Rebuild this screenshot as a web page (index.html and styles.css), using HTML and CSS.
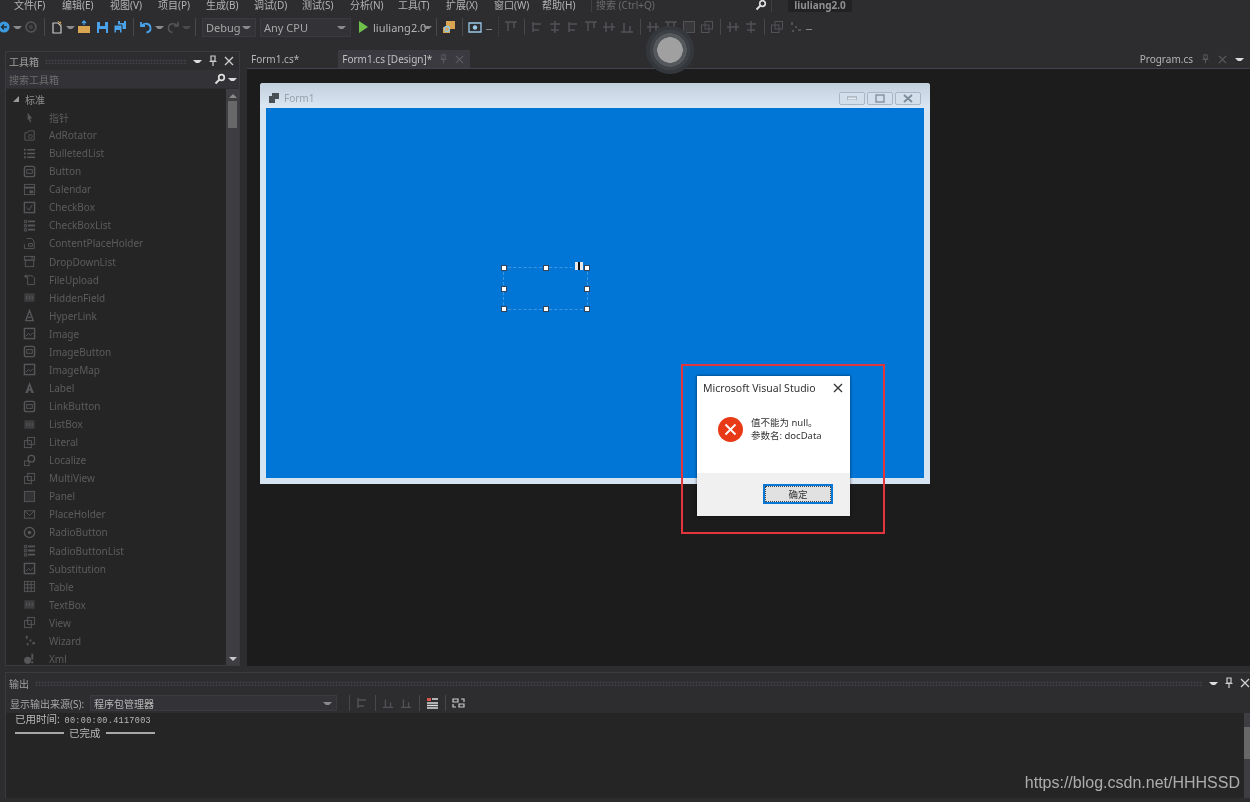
FILE: index.html
```html
<!DOCTYPE html>
<html lang="en">
<head>
	<meta charset="UTF-8">
	<meta name="viewport" content="width=device-width, initial-scale=1.0">
	<title>liuliang2.0 - Microsoft Visual Studio</title>
	<link rel="stylesheet" href="styles.css">
</head>
<body>
	<svg class="sprite" xmlns="http://www.w3.org/2000/svg">
		<symbol id="i-pointer" viewBox="0 0 14 14"><path d="M5 2l5 6H7.5L9 11.5 7.6 12 6 8.6 5 10z" fill="currentColor" stroke="none"/></symbol>
		<symbol id="i-ad" viewBox="0 0 14 14"><path d="M2 4h3l1-2h6v10H2z"/><circle cx="8" cy="8" r="2"/></symbol>
		<symbol id="i-list" viewBox="0 0 14 14"><path d="M4.500 3H13M4.500 7H13M4.500 11H13" stroke-width="1.500"/><path d="M1 2h2v2H1zM1 6h2v2H1zM1 10h2v2H1z" fill="currentColor" stroke="none"/></symbol>
		<symbol id="i-checklist" viewBox="0 0 14 14"><path d="M5.500 2.500H13M5.500 7H13M5.500 11.500H13" stroke-width="2"/><path d="M1.500 1.500h2.500v2.500H1.500zM1.500 6h2.500v2.500H1.500zM1.500 10.500h2.500V13H1.500z"/></symbol>
		<symbol id="i-button" viewBox="0 0 14 14"><rect x="1.500" y="1.500" width="11" height="11" rx="2" stroke-width="1.500"/><rect x="4" y="5" width="6" height="4"/></symbol>
		<symbol id="i-calendar" viewBox="0 0 14 14"><rect x="1.500" y="1.500" width="11" height="11"/><path d="M1.500 5h11" stroke-width="2"/><path d="M7 8h4v3H7z" fill="currentColor" stroke="none"/></symbol>
		<symbol id="i-check" viewBox="0 0 14 14"><rect x="1.500" y="1.500" width="11" height="11" stroke-width="1.500"/><path d="M4 7l2.500 3L10 4"/></symbol>
		<symbol id="i-doc" viewBox="0 0 14 14"><path d="M4 1.500h5l3 3v8H4M1.500 8v4.500H4"/><path d="M6 7h4v3H6z"/></symbol>
		<symbol id="i-drop" viewBox="0 0 14 14"><rect x="1.500" y="1.500" width="11" height="4"/><rect x="2.500" y="5.500" width="9" height="7"/><path d="M9 3h2" stroke-width="1.500"/></symbol>
		<symbol id="i-upload" viewBox="0 0 14 14"><path d="M5 3h5l2.500 2.500v7H5z"/><path d="M1 3.500L4 1v5z" fill="currentColor" stroke="none"/></symbol>
		<symbol id="i-hidden" viewBox="0 0 14 14"><rect x="1.500" y="2.500" width="11" height="9" fill="currentColor" opacity=".5" stroke="none"/><path d="M4 5.500v3M7 5.500v3M10 5.500v3"/></symbol>
		<symbol id="i-a" viewBox="0 0 14 14"><path d="M7 1.500L3 12.500h8zM5.500 9h3" stroke-width="1.500"/></symbol>
		<symbol id="i-image" viewBox="0 0 14 14"><rect x="1.500" y="1.500" width="11" height="11" stroke-width="1.500"/><path d="M3 10l3-3 2 2 3-3"/></symbol>
		<symbol id="i-label" viewBox="0 0 14 14"><path d="M7 1L2.500 13h2.800l.8-2.800h2L9 13h2.800zM6.300 8.500L7 5.500l.8 3z" fill="currentColor" stroke="none"/></symbol>
		<symbol id="i-stack" viewBox="0 0 14 14"><rect x="5" y="1.500" width="7.500" height="7.500"/><rect x="1.500" y="5" width="7.500" height="7.500"/></symbol>
		<symbol id="i-locale" viewBox="0 0 14 14"><circle cx="9" cy="5" r="3.500" stroke-width="1.500"/><rect x="1.500" y="7.500" width="5" height="5"/></symbol>
		<symbol id="i-panel" viewBox="0 0 14 14"><rect x="1.500" y="1.500" width="11" height="11" fill="currentColor" fill-opacity=".3"/></symbol>
		<symbol id="i-mail" viewBox="0 0 14 14"><rect x="1.500" y="3" width="11" height="8"/><path d="M1.500 3L7 8l5.500-5"/></symbol>
		<symbol id="i-radio" viewBox="0 0 14 14"><circle cx="7" cy="7" r="5.500" stroke-width="1.500"/><circle cx="7" cy="7" r="2" fill="currentColor" stroke="none"/></symbol>
		<symbol id="i-table" viewBox="0 0 14 14"><rect x="1.500" y="1.500" width="11" height="11"/><path d="M1.500 5h11M1.500 8.500h11M5 1.500v11M8.800 1.500v11"/></symbol>
		<symbol id="i-wizard" viewBox="0 0 14 14"><path d="M3 2h2v3H3zM7 6h2v2H7zM10 9h3v2h-3zM4 10h2v2H4z" fill="currentColor" stroke="none"/></symbol>
		<symbol id="i-xml" viewBox="0 0 14 14"><circle cx="5" cy="9" r="3.800" fill="currentColor" stroke="none"/><path d="M10 2v6M10 10v2" stroke-width="2"/></symbol>
		<symbol id="i-align" viewBox="0 0 14 14"><path d="M3 2v10M3 4h8M3 10h6" stroke-width="1.500"/></symbol>
		<symbol id="i-center" viewBox="0 0 14 14"><path d="M7 1v12M2 4h10M3 10h8" stroke-width="1.500"/></symbol>
		<symbol id="i-top" viewBox="0 0 14 14"><path d="M1 2h12M4 2v9M10 2v6" stroke-width="1.500"/></symbol>
		<symbol id="i-middle" viewBox="0 0 14 14"><path d="M1 7h12M4 2v10M10 3v8" stroke-width="1.500"/></symbol>
		<symbol id="i-bottom" viewBox="0 0 14 14"><path d="M1 12h12M4 3v9M10 6v6" stroke-width="1.500"/></symbol>
		<symbol id="i-pin" viewBox="0 0 10 12"><path d="M3 1h4v5H3zM1.500 6.500h7M5 7v4" stroke-width="1.200"/></symbol>
		<symbol id="i-close" viewBox="0 0 10 10"><path d="M1 1l8 8M9 1L1 9" stroke-width="1.300"/></symbol>
		<symbol id="i-search" viewBox="0 0 12 12"><circle cx="7.500" cy="4.500" r="2.800" stroke-width="1.700"/><path d="M5.500 6.500L1.500 10.500" stroke-width="2"/></symbol>
	</svg>

	<div class="app">
		<div class="menubar">
			<span class="menu-item">文件(F)</span>
			<span class="menu-item">编辑(E)</span>
			<span class="menu-item">视图(V)</span>
			<span class="menu-item">项目(P)</span>
			<span class="menu-item">生成(B)</span>
			<span class="menu-item">调试(D)</span>
			<span class="menu-item">测试(S)</span>
			<span class="menu-item">分析(N)</span>
			<span class="menu-item">工具(T)</span>
			<span class="menu-item">扩展(X)</span>
			<span class="menu-item">窗口(W)</span>
			<span class="menu-item">帮助(H)</span>
			<div class="quick-search">
				<span>搜索 (Ctrl+Q)</span>
				<svg class="ico search-ico"><use href="#i-search"/></svg>
			</div>
			<div class="solution-name">liuliang2.0</div>
		</div>

		<div class="toolbar">
			<span class="tb tb-back"><svg width="12" height="12" viewBox="0 0 12 12"><circle cx="6" cy="6" r="5.500" fill="#3c9ae0"/><path d="M9 6H4M6 3.500L3.500 6 6 8.500" fill="none" stroke="#1f2a33" stroke-width="1.300"/></svg></span>
			<span class="tb-arrow"></span>
			<span class="tb"><svg width="12" height="12" viewBox="0 0 12 12"><circle cx="6" cy="6" r="5" fill="none" stroke="#555" stroke-width="1.500"/><circle cx="6" cy="6" r="2" fill="#444"/></svg></span>
			<span class="tb-sep"></span>
			<span class="tb"><svg width="14" height="14" viewBox="0 0 14 14"><path d="M3 3h5l3 3v7H3z" fill="none" stroke="#c8c8c8" stroke-width="1.200"/><path d="M8 1l1 1.500L11 2l-1 1.500 1.500 1" fill="none" stroke="#d8a24a"/></svg></span>
			<span class="tb-arrow"></span>
			<span class="tb"><svg width="14" height="14" viewBox="0 0 14 14"><path d="M1 6h12v7H1z" fill="#d9a550"/><path d="M7 1v4M5 3l2-2 2 2" fill="none" stroke="#4a9fe0" stroke-width="1.300"/></svg></span>
			<span class="tb"><svg width="13" height="13" viewBox="0 0 13 13"><path d="M1 1h11v11H1z" fill="#4aa3ea"/><path d="M4 1h5v4H4zM3 8h7v4H3z" fill="#2d2d30"/></svg></span>
			<span class="tb"><svg width="14" height="14" viewBox="0 0 14 14"><path d="M5 1h8v8H5z" fill="#4aa3ea"/><path d="M1 5h8v8H1z" fill="#4aa3ea" stroke="#2d2d30"/><path d="M3 10h4v3H3zM7 1h4v2H7z" fill="#2d2d30"/></svg></span>
			<span class="tb-sep"></span>
			<span class="tb"><svg width="14" height="14" viewBox="0 0 14 14"><path d="M2 2v4h4M2.500 6C5 2.500 11 3 11.500 7.500 11.800 10 10 12 7.500 12.500" fill="none" stroke="#4aa3ea" stroke-width="1.800"/></svg></span>
			<span class="tb-arrow"></span>
			<span class="tb"><svg width="14" height="14" viewBox="0 0 14 14"><path d="M12 2v4H8M11.500 6C9 2.500 3 3 2.500 7.500 2.200 10 4 12 6.500 12.500" fill="none" stroke="#555" stroke-width="1.500"/></svg></span>
			<span class="tb-arrow tb-arrow-dim"></span>
			<span class="tb-sep"></span>
			<div class="combo combo-debug">Debug<span class="tb-arrow"></span></div>
			<div class="combo combo-cpu">Any CPU<span class="tb-arrow"></span></div>
			<span class="tb-play"><svg width="10" height="12" viewBox="0 0 10 12"><path d="M1 0l9 6-9 6z" fill="#6fbf4a"/></svg></span>
			<span class="run-name">liuliang2.0</span>
			<span class="tb-arrow"></span>
			<span class="tb-sep"></span>
			<span class="tb"><svg width="14" height="14" viewBox="0 0 14 14"><path d="M4 1h9v8H8v4H1V7h3z" fill="#d9a550"/><circle cx="5" cy="9" r="2.500" fill="none" stroke="#8fc7f0" stroke-width="1.300"/></svg></span>
			<span class="tb-sep"></span>
			<span class="tb"><svg width="14" height="12" viewBox="0 0 14 12"><path d="M1 2h12v9H1z" fill="none" stroke="#9ac8e8" stroke-width="1.300"/><circle cx="7" cy="6.500" r="2.200" fill="#9ac8e8"/></svg></span>
			<span class="tb-drop"></span>
			<span class="tb-grip"></span>
			<span class="tb tb-dim"><svg class="ico" width="14" height="14"><use href="#i-top"/></svg></span>
			<span class="tb-sep tb-sep-short"></span>
			<span class="tb tb-dim"><svg class="ico" width="14" height="14"><use href="#i-align"/></svg></span>
			<span class="tb tb-dim"><svg class="ico" width="14" height="14"><use href="#i-center"/></svg></span>
			<span class="tb tb-dim"><svg class="ico" width="14" height="14"><use href="#i-align"/></svg></span>
			<span class="tb tb-dim"><svg class="ico" width="14" height="14"><use href="#i-top"/></svg></span>
			<span class="tb tb-dim"><svg class="ico" width="14" height="14"><use href="#i-middle"/></svg></span>
			<span class="tb tb-dim"><svg class="ico" width="14" height="14"><use href="#i-bottom"/></svg></span>
			<span class="tb-sep tb-sep-short"></span>
			<span class="tb tb-dim"><svg class="ico" width="14" height="14"><use href="#i-middle"/></svg></span>
			<span class="tb tb-dim"><svg class="ico" width="14" height="14"><use href="#i-top"/></svg></span>
			<span class="tb tb-dim"><svg class="ico" width="14" height="14"><use href="#i-panel"/></svg></span>
			<span class="tb tb-dim"><svg class="ico" width="14" height="14"><use href="#i-stack"/></svg></span>
			<span class="tb-sep tb-sep-short"></span>
			<span class="tb tb-dim"><svg class="ico" width="14" height="14"><use href="#i-middle"/></svg></span>
			<span class="tb tb-dim"><svg class="ico" width="14" height="14"><use href="#i-center"/></svg></span>
			<span class="tb-sep tb-sep-short"></span>
			<span class="tb tb-dim"><svg class="ico" width="14" height="14"><use href="#i-stack"/></svg></span>
			<span class="tb tb-dim"><svg class="ico" width="14" height="14"><use href="#i-wizard"/></svg></span>
			<span class="tb-drop"></span>
		</div>

		<div class="workspace">
			<div class="toolbox">
				<div class="panel-title">
					<span class="panel-name">工具箱</span>
					<span class="panel-grip"></span>
					<span class="tb-arrow tb-arrow-light"></span>
					<svg class="ico panel-ico" width="10" height="12"><use href="#i-pin"/></svg>
					<svg class="ico panel-ico" width="10" height="10"><use href="#i-close"/></svg>
				</div>
				<div class="toolbox-search">
					<span>搜索工具箱</span>
					<svg class="ico search-ico"><use href="#i-search"/></svg>
					<span class="tb-arrow tb-arrow-light"></span>
				</div>
				<div class="toolbox-body">
					<div class="tree">
						<div class="tree-head"><span class="tree-caret"></span>标准</div>
						<ul class="tool-list">
							<li><svg class="ico"><use href="#i-pointer"/></svg>指针</li>
							<li><svg class="ico"><use href="#i-ad"/></svg>AdRotator</li>
							<li><svg class="ico"><use href="#i-list"/></svg>BulletedList</li>
							<li><svg class="ico"><use href="#i-button"/></svg>Button</li>
							<li><svg class="ico"><use href="#i-calendar"/></svg>Calendar</li>
							<li><svg class="ico"><use href="#i-check"/></svg>CheckBox</li>
							<li><svg class="ico"><use href="#i-checklist"/></svg>CheckBoxList</li>
							<li><svg class="ico"><use href="#i-doc"/></svg>ContentPlaceHolder</li>
							<li><svg class="ico"><use href="#i-drop"/></svg>DropDownList</li>
							<li><svg class="ico"><use href="#i-upload"/></svg>FileUpload</li>
							<li><svg class="ico"><use href="#i-hidden"/></svg>HiddenField</li>
							<li><svg class="ico"><use href="#i-a"/></svg>HyperLink</li>
							<li><svg class="ico"><use href="#i-image"/></svg>Image</li>
							<li><svg class="ico"><use href="#i-button"/></svg>ImageButton</li>
							<li><svg class="ico"><use href="#i-image"/></svg>ImageMap</li>
							<li><svg class="ico"><use href="#i-label"/></svg>Label</li>
							<li><svg class="ico"><use href="#i-button"/></svg>LinkButton</li>
							<li><svg class="ico"><use href="#i-hidden"/></svg>ListBox</li>
							<li><svg class="ico"><use href="#i-stack"/></svg>Literal</li>
							<li><svg class="ico"><use href="#i-locale"/></svg>Localize</li>
							<li><svg class="ico"><use href="#i-stack"/></svg>MultiView</li>
							<li><svg class="ico"><use href="#i-panel"/></svg>Panel</li>
							<li><svg class="ico"><use href="#i-mail"/></svg>PlaceHolder</li>
							<li><svg class="ico"><use href="#i-radio"/></svg>RadioButton</li>
							<li><svg class="ico"><use href="#i-checklist"/></svg>RadioButtonList</li>
							<li><svg class="ico"><use href="#i-image"/></svg>Substitution</li>
							<li><svg class="ico"><use href="#i-table"/></svg>Table</li>
							<li><svg class="ico"><use href="#i-hidden"/></svg>TextBox</li>
							<li><svg class="ico"><use href="#i-stack"/></svg>View</li>
							<li><svg class="ico"><use href="#i-wizard"/></svg>Wizard</li>
							<li><svg class="ico"><use href="#i-xml"/></svg>Xml</li>
						</ul>
					</div>
					<div class="vscroll">
						<span class="caret-up"></span>
						<span class="vscroll-thumb"></span>
						<span class="vscroll-gap"></span>
						<span class="caret-down"></span>
					</div>
				</div>
			</div>

			<div class="document">
				<div class="doc-tabs">
					<span class="doc-tab">Form1.cs*</span>
					<span class="doc-tab doc-tab-active">Form1.cs [Design]*
						<svg class="ico tab-ico" width="9" height="10"><use href="#i-pin"/></svg>
						<svg class="ico tab-ico" width="9" height="9"><use href="#i-close"/></svg>
					</span>
					<span class="doc-tab-spacer"></span>
					<span class="doc-tab doc-tab-right">Program.cs
						<svg class="ico tab-ico" width="9" height="10"><use href="#i-pin"/></svg>
						<svg class="ico tab-ico" width="9" height="9"><use href="#i-close"/></svg>
						<span class="tb-arrow tb-arrow-light"></span>
					</span>
				</div>
				<div class="designer">
					<div class="form-window">
						<div class="form-title">
							<svg width="10" height="10" viewBox="0 0 10 10"><path d="M3 0h7v6H3zM0 3h6v7H0z" fill="#4a4f55"/></svg>
							<span class="form-name">Form1</span>
							<span class="win-btn"><svg width="10" height="4" viewBox="0 0 10 4"><rect width="10" height="3" y="1" fill="#e8eef4" stroke="#7d8a98" stroke-width=".8"/></svg></span>
							<span class="win-btn"><svg width="10" height="9" viewBox="0 0 10 9"><rect x="1" y="1" width="8" height="7" fill="none" stroke="#7d8a98" stroke-width="1.300"/></svg></span>
							<span class="win-btn"><svg width="10" height="9" viewBox="0 0 10 9"><path d="M1 1l8 7M9 1L1 8" stroke="#7d8a98" stroke-width="1.800"/></svg></span>
						</div>
						<div class="form-client">
							<div class="selection">
								<span class="handle h-tl"></span>
								<span class="handle h-tc"></span>
								<span class="handle h-tr"></span>
								<span class="handle h-ml"></span>
								<span class="handle h-mr"></span>
								<span class="handle h-bl"></span>
								<span class="handle h-bc"></span>
								<span class="handle h-br"></span>
								<span class="smart-tag"></span>
							</div>
						</div>
					</div>
				</div>
			</div>
		</div>

		<div class="output">
			<div class="panel-title output-title">
				<span class="panel-name">输出</span>
				<span class="panel-grip"></span>
				<span class="tb-arrow tb-arrow-light"></span>
				<svg class="ico panel-ico" width="10" height="12"><use href="#i-pin"/></svg>
				<svg class="ico panel-ico" width="10" height="10"><use href="#i-close"/></svg>
			</div>
			<div class="output-bar">
				<span class="output-label">显示输出来源(S):</span>
				<div class="combo combo-output">程序包管理器<span class="tb-arrow"></span></div>
				<span class="tb-sep tb-sep-short"></span>
				<span class="tb tb-dim"><svg class="ico" width="14" height="14"><use href="#i-align"/></svg></span>
				<span class="tb-sep tb-sep-short"></span>
				<span class="tb tb-dim"><svg class="ico" width="12" height="12"><use href="#i-bottom"/></svg></span>
				<span class="tb tb-dim"><svg class="ico" width="12" height="12"><use href="#i-bottom"/></svg></span>
				<span class="tb-sep tb-sep-short"></span>
				<span class="tb"><svg width="12" height="12" viewBox="0 0 12 12"><path d="M1 1h4v3H1z" fill="#d9534f"/><path d="M6 2h6M1 6h11M1 8.500h11M1 11h11" stroke="#ddd" stroke-width="1.300"/></svg></span>
				<span class="tb-sep tb-sep-short"></span>
				<span class="tb"><svg width="13" height="12" viewBox="0 0 13 12"><path d="M1 2h5v3H1zM7 7h5v3H7zM9 2h3v3M4 10H1V7" fill="none" stroke="#ccc" stroke-width="1.200"/></svg></span>
			</div>
			<div class="output-text">
				<div class="output-lines">
					<div class="output-line">已用时间: <span class="output-time">00:00:00.4117003</span></div>
					<div class="output-line output-done"><span class="rule"></span>已完成<span class="rule"></span></div>
				</div>
				<div class="output-scroll"><span class="output-thumb"></span></div>
			</div>
		</div>

		<div class="touch-dot"></div>

		<div class="msgbox">
			<div class="msgbox-title">
				<span>Microsoft Visual Studio</span>
				<svg class="ico msgbox-close" width="10" height="10"><use href="#i-close"/></svg>
			</div>
			<div class="msgbox-body">
				<svg class="msgbox-icon" width="25" height="25" viewBox="0 0 25 25"><circle cx="12.500" cy="12.500" r="12.500" fill="#e83a17"/><path d="M7.500 7.500l10 10M17.500 7.500l-10 10" stroke="#fff" stroke-width="1.800"/></svg>
				<p class="msgbox-text">值不能为 null。<br>参数名: docData</p>
			</div>
			<div class="msgbox-foot">
				<button class="msgbox-ok">确定</button>
			</div>
		</div>
		<div class="red-box"></div>

		<div class="watermark">https://blog.csdn.net/HHHSSD</div>
	</div>
</body>
</html>
```
FILE: styles.css
```css
* {
	box-sizing: border-box;
}
body {
	margin: 0;
	padding: 0;
	background: #2d2d30;
	overflow: hidden;
}
.sprite {
	display: none;
}
.ico {
	fill: none;
	stroke: currentColor;
	flex: none;
}
.app {
	position: relative;
	width: 1250px;
	height: 802px;
	overflow: hidden;
	background: #2d2d30;
	color: #b4b4b4;
	font-family: "Noto Sans", "Noto Sans CJK SC", sans-serif;
	font-size: 10px;
	filter: blur(0.45px);
}

/* menu */
.menubar {
	display: flex;
	align-items: center;
	height: 12px;
	padding-left: 14px;
	gap: 16px;
	overflow: hidden;
	background: #2d2d30;
}
.menu-item {
	flex: none;
	width: 32px;
	line-height: 12px;
	white-space: nowrap;
	margin-top: -2px;
}
.quick-search {
	display: flex;
	align-items: center;
	justify-content: space-between;
	width: 181px;
	height: 14px;
	margin-left: 1px;
	padding: 0 4px 2px 4px;
	border: 1px solid #3f3f46;
	border-top: 0;
	color: #6b6b6b;
}
.search-ico {
	width: 12px;
	height: 12px;
	color: #ddd;
}
.solution-name {
	width: 64px;
	height: 15px;
	line-height: 13px;
	text-align: center;
	background: #222224;
	color: #8f8f8f;
	font-weight: 700;
}

/* toolbar */
.toolbar {
	display: flex;
	align-items: center;
	height: 30px;
	margin-left: -5px;
}
.tb {
	flex: none;
	display: flex;
	align-items: center;
	justify-content: center;
	width: 18px;
	height: 18px;
}
.tb-dim {
	color: #525256;
}
.tb-arrow {
	flex: none;
	display: inline-block;
	width: 9px;
	height: 3px;
	border-top: 3px solid #8a8a8a;
	border-left: 3px solid transparent;
	border-right: 3px solid transparent;
	background-clip: padding-box;
}
.tb-arrow-dim {
	border-top-color: #4b4b4b;
}
.tb-arrow-light {
	border-top-color: #dcdcdc;
}
.tb-sep {
	flex: none;
	width: 8px;
	height: 18px;
	background: linear-gradient(#47474c, #47474c) center / 1px 100% no-repeat;
}
.tb-sep-short {
	height: 16px;
}
.tb-drop {
	flex: none;
	width: 10px;
	height: 5px;
	margin-top: 9px;
	background: linear-gradient(#888, #888) center top / 6px 1px no-repeat;
	border-bottom: 0;
}
.tb-grip {
	flex: none;
	width: 8px;
	height: 22px;
	background: radial-gradient(#55555a 40%, transparent 45%) center / 3px 3px repeat-y;
}
.combo {
	flex: none;
	display: flex;
	align-items: center;
	justify-content: space-between;
	height: 19px;
	padding: 0 4px 0 3px;
	background: #333337;
	border: 1px solid #3a3a3f;
	color: #a8a8a8;
	font-size: 11px;
}
.combo-debug {
	width: 54px;
	margin-left: 3px;
}
.combo-cpu {
	width: 91px;
	margin-left: 4px;
}
.tb-play {
	flex: none;
	display: flex;
	justify-content: center;
	width: 14px;
	margin-left: 5px;
}
.run-name {
	flex: none;
	width: 50px;
	margin-left: 3px;
	font-size: 11px;
	color: #b4b4b4;
}

/* middle */
.workspace {
	display: flex;
	gap: 7px;
	height: 616px;
	margin-top: 8px;
	padding-left: 5px;
}
.toolbox {
	display: flex;
	flex-direction: column;
	flex: none;
	width: 235px;
	margin-top: 1px;
	border: 1px solid #3a3a3f;
	background: #252526;
}
.panel-title {
	display: flex;
	align-items: center;
	flex: none;
	gap: 6px;
	height: 18px;
	padding: 0 5px 0 3px;
	background: #2d2d30;
	color: #a0a0a0;
}
.panel-name {
	flex: none;
}
.panel-grip {
	flex: 1;
	height: 5px;
	background: radial-gradient(#3f3f44 45%, transparent 50%) 0 0 / 3px 3px;
}
.panel-ico {
	color: #cfcfcf;
}
.toolbox-search {
	display: flex;
	align-items: center;
	flex: none;
	gap: 2px;
	height: 19px;
	padding: 0 2px 0 3px;
	background: #333337;
	color: #6e6e6e;
	border-bottom: 1px solid #2d2d30;
}
.toolbox-search span:first-child {
	flex: 1;
}
.toolbox-body {
	display: flex;
	flex: 1;
	min-height: 0;
}
.tree {
	flex: 1;
	overflow: hidden;
	padding-top: 1px;
}
.tree-head {
	display: flex;
	align-items: center;
	height: 18px;
	padding-left: 7px;
	color: #8e8e8e;
}
.tree-caret {
	width: 0;
	height: 0;
	margin-right: 6px;
	border-bottom: 6px solid #9a9a9a;
	border-left: 6px solid transparent;
}
.tool-list {
	list-style: none;
	margin: 0;
	padding: 0;
}
.tool-list li {
	display: flex;
	align-items: center;
	height: 18.07px;
	padding-left: 17px;
	color: #5c5c5c;
	font-size: 10px;
	white-space: nowrap;
}
.tool-list .ico {
	width: 13px;
	height: 13px;
	margin-right: 13px;
	color: #57575a;
}
.vscroll {
	display: flex;
	flex-direction: column;
	align-items: center;
	flex: none;
	width: 13px;
	padding: 5px 0 4px;
	background: #3e3e42;
}
.vscroll-thumb {
	width: 9px;
	height: 27px;
	margin-top: 3px;
	background: #686868;
}
.vscroll-gap {
	flex: 1;
}
.caret-up, .caret-down {
	width: 0;
	height: 0;
	border-left: 4px solid transparent;
	border-right: 4px solid transparent;
}
.caret-up {
	border-bottom: 4px solid #8a8a8a;
}
.caret-down {
	border-top: 4px solid #c8c8c8;
}

/* document area */
.document {
	display: flex;
	flex-direction: column;
	flex: 1;
	min-width: 0;
}
.doc-tabs {
	display: flex;
	align-items: flex-end;
	flex: none;
	height: 19px;
	border-bottom: 1px solid #43434c;
}
.doc-tab {
	display: flex;
	align-items: center;
	height: 18px;
	padding: 0 4px;
	color: #b4b4b4;
	white-space: nowrap;
}
.doc-tab-active {
	width: 132px;
	margin-left: 35px;
	background: #3a3a40;
	color: #c0c0c0;
	gap: 7px;
}
.doc-tab-spacer {
	flex: 1;
}
.doc-tab-right {
	gap: 8px;
	color: #b4b4b4;
	padding-right: 6px;
}
.tab-ico {
	color: #5c5c60;
}
.designer {
	flex: 1;
	padding: 14px 0 0 13px;
	background: #1c1c1c;
}
.form-window {
	display: flex;
	flex-direction: column;
	width: 670px;
	height: 401px;
	padding: 0 6px 6px;
	border-radius: 3px 3px 0 0;
	background: #d6e3f0;
}
.form-title {
	display: flex;
	align-items: center;
	flex: none;
	height: 25px;
	margin: 0 -6px;
	padding: 5px 9px 0 9px;
	border-radius: 3px 3px 0 0;
	background: linear-gradient(#c2cfdc, #dbe7f3);
	gap: 2px;
}
.form-name {
	flex: 1;
	margin-left: 3px;
	color: #97a2ac;
}
.win-btn {
	display: flex;
	align-items: center;
	justify-content: center;
	width: 26px;
	height: 13px;
	border: 1px solid #a9b6c4;
	border-radius: 2px;
	background: #d3dfeb;
}
.form-client {
	position: relative;
	flex: 1;
	background: #0176d7;
}
.selection {
	position: absolute;
	left: 237px;
	top: 159px;
	width: 85px;
	height: 43px;
	border: 1px dashed #3e97dd;
}
.handle {
	position: absolute;
	width: 6px;
	height: 6px;
	background: #fff;
	border: 1px solid #33455a;
	margin: -3px 0 0 -3px;
}
.h-tl { left: 0; top: 0; }
.h-tc { left: 50%; top: 0; }
.h-tr { left: 100%; top: 0; }
.h-ml { left: 0; top: 50%; }
.h-mr { left: 100%; top: 50%; }
.h-bl { left: 0; top: 100%; }
.h-bc { left: 50%; top: 100%; }
.h-br { left: 100%; top: 100%; }
.smart-tag {
	position: absolute;
	left: 71px;
	top: -6px;
	width: 8px;
	height: 8px;
	background: linear-gradient(90deg, #e8e8e8 35%, #111 35%, #111 60%, #e8e8e8 60%);
}

/* output */
.output {
	display: flex;
	flex-direction: column;
	height: 126px;
	margin: 6px 0 0 5px;
	border-top: 1px solid #3a3a3f;
	border-left: 1px solid #3a3a3f;
}
.output-title {
	height: 20px;
	padding-right: 0;
}
.output-bar {
	display: flex;
	align-items: center;
	flex: none;
	height: 20px;
	padding-left: 4px;
}
.output-label {
	flex: none;
	width: 80px;
	color: #a8a8a8;
}
.combo-output {
	width: 247px;
	height: 16px;
	margin-right: 8px;
	font-size: 10px;
	color: #b8b8b8;
}
.output-text {
	display: flex;
	flex: 1;
	background: #252526;
	margin-right: 0;
}
.output-lines {
	flex: 1;
	padding: 0 0 0 9px;
	color: #b8b8b8;
}
.output-line {
	height: 13px;
	line-height: 12px;
	font-size: 10.500px;
}
.output-time {
	margin-left: 2px;
	font-family: "Liberation Mono", monospace;
	font-size: 8.500px;
	letter-spacing: .3px;
}
.output-done {
	display: flex;
	align-items: center;
	gap: 5px;
}
.rule {
	width: 49px;
	height: 2px;
	background: #a8a8a8;
}
.output-scroll {
	flex: none;
	width: 6px;
	padding-top: 14px;
	background: #3e3e42;
}
.output-thumb {
	display: block;
	height: 32px;
	background: #686868;
}

/* overlays */
.touch-dot {
	position: absolute;
	left: 646px;
	top: 26px;
	width: 48px;
	height: 48px;
	border-radius: 50%;
	background: radial-gradient(circle, #a0a0a0 0 12.5px, #55585c 13px 16.5px, #3d4146 17px 20px, #34383d 20.500px 24px);
}
.msgbox {
	position: absolute;
	left: 697px;
	top: 376px;
	display: flex;
	flex-direction: column;
	width: 153px;
	height: 140px;
	background: #fff;
	box-shadow: 0 0 3px rgba(0, 0, 0, .6);
	color: #222;
}
.msgbox-title {
	display: flex;
	align-items: center;
	justify-content: space-between;
	flex: none;
	height: 23px;
	padding: 0 7px 0 6px;
	font-size: 10.500px;
	color: #333;
}
.msgbox-close {
	color: #333;
}
.msgbox-body {
	display: flex;
	align-items: center;
	flex: 1;
	padding: 0 0 14px 21px;
	gap: 8px;
}
.msgbox-icon {
	flex: none;
}
.msgbox-text {
	margin: 0;
	font-size: 9.500px;
	line-height: 13px;
	color: #333;
}
.msgbox-foot {
	display: flex;
	justify-content: flex-end;
	align-items: flex-start;
	flex: none;
	height: 43px;
	padding: 11px 17px 0 0;
	background: #f0f0f0;
}
.msgbox-ok {
	width: 70px;
	height: 20px;
	padding: 0;
	border: 2px solid #0a78d7;
	outline: 1px dotted #444;
	outline-offset: -3px;
	background: #e1e1e1;
	color: #333;
	font-family: inherit;
	font-size: 9.500px;
}
.red-box {
	position: absolute;
	left: 681px;
	top: 364px;
	width: 204px;
	height: 170px;
	border: 2px solid #e2363c;
}
.watermark {
	position: absolute;
	right: 10px;
	top: 773px;
	font-family: "Liberation Sans", sans-serif;
	font-size: 16px;
	line-height: 20px;
	color: #adadad;
}
```
